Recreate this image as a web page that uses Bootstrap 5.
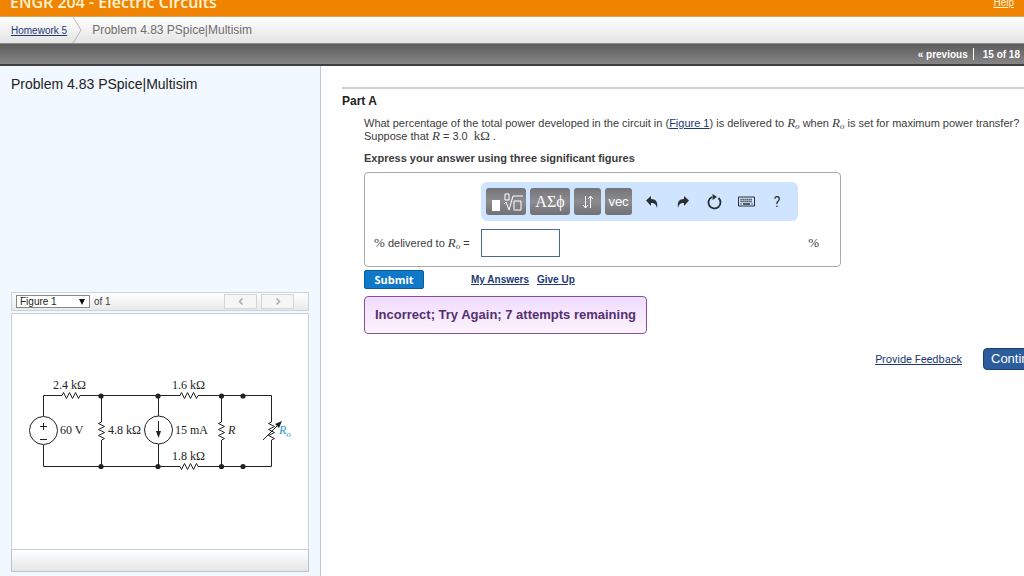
<!DOCTYPE html>
<html lang="en">
<head>
<meta charset="utf-8">
<meta name="viewport" content="width=device-width, initial-scale=1">
<title>Problem 4.83 PSpice|Multisim</title>
<link href="https://cdn.jsdelivr.net/npm/bootstrap@5.3.0/dist/css/bootstrap.min.css" rel="stylesheet">
<style>
  body { font-family: "Liberation Sans", Arial, sans-serif; font-size: 12px; line-height: 13px; color: #3c3c3c; overflow: hidden; }
  a { color: #1d3a75; }
  .course-bar { background: #f08400; height: 17px; border-bottom: 1px solid #d9a258; padding: 0 10px 5px; overflow: hidden; }
  .course-title { font: 600 16px/18px "Open Sans", Verdana, sans-serif; color: #fff3d6; }
  .help-link { color: #fff3d6; font-size: 10px; line-height: 16px; }
  .crumbs { background: linear-gradient(#fff, #e4e4e4); height: 26px; padding-left: 11px; }
  .crumb-home { font-size: 10px; }
  .crumb-here { font-size: 12px; line-height: 14px; color: #6e6e6e; }
  .pager-bar { background: linear-gradient(#5c5c5c, #868686); height: 23px; border-top: 1px solid #8d8d8d; border-bottom: 2px solid #3e3e3e; font-size: 10px; padding-right: 4px; }
  .pager-bar a, .pager-bar span { color: #fff; }
  .pager-rule { width: 1px; height: 12px; background: #fff; margin: 0 9px 0 5px; }
  .side { flex: 0 0 321px; background: #f2f8ff; border-right: 1px solid #b9c6d4; padding: 10px 11px 4px; }
  .side h1 { font-size: 14px; line-height: 17px; color: #222; }
  .fig-bar { background: linear-gradient(#fff, #e9e9e9); border: 1px solid #c8d4de; font-size: 10px; height: 19px; padding: 0 14px 0 4px; }
  .fig-select { width: 74px; height: 13px; border: 1px solid #888; background: #fff; color: #222; font-size: 10px; line-height: 11px; padding: 0 3px; appearance: none; }
  .fig-select-wrap svg { position: absolute; right: 5px; top: 4px; pointer-events: none; }
  .fig-nav { width: 33px; height: 15px; border: 1px solid #d0d5da; border-radius: 0; background: #f6f6f6; }
  .fig-body { background: #fff; border: 1px solid #c4d0da; height: 237px; margin-top: 2px; }
  .fig-foot { background: linear-gradient(#fff, #e6e6e6); border: 1px solid #b8c5ce; border-top: 0; height: 22px; }
  .circuit-label { font: 12px "Liberation Serif", "Times New Roman", serif; fill: #222; }
  .task { min-width: 0; padding: 21px 0 0 21px; overflow: hidden; }
  .part { border-top: 2px solid #cfcfcf; padding-top: 5px; }
  .part h2 { font-size: 12px; line-height: 14px; font-weight: 700; color: #222; }
  .part-content { padding-left: 22px; }
  .question { font-size: 11px; line-height: 13px; margin: 9px 0; }
  .hint { font-size: 11px; line-height: 13px; font-weight: 700; margin-bottom: 7px; }
  .mathvar { font-family: "Liberation Serif", "Times New Roman", serif; font-size: 13px; line-height: 10px; }
  .mathvar sub { font-size: 9px; bottom: -2px; }
  .answer-box { width: 477px; max-width: 100%; height: 95px; border: 1px solid #aaa; border-radius: 4px; padding: 9px 9px; }
  .mathbar { background: #cfe5ff; border-radius: 6px; width: 317px; height: 39px; padding: 0 5px; margin-left: 107px; }
  .tool-btn { height: 27px; border: 0; border-radius: 3px; background: linear-gradient(#74747a, #8c8c8f 50%, #707075); color: #fff; line-height: 20px; padding: 0; }
  .tool-sq { width: 27px; font-size: 13px; }
  .tool-wide { width: 40px; font: 16px/20px "Liberation Serif", serif; }
  .tool-icon { width: 16px; height: 18px; border: 0; background: none; color: #2b2f33; padding: 0; }
  .tool-help { font: 14px/18px Roboto, sans-serif; }
  .answer-label { width: 107px; font-size: 11px; }
  .answer-input { width: 79px; height: 28px; border: 1px solid #4a6a8e; border-radius: 0; background: #fff; padding: 2px 4px; font-size: 14px; }
  .submit-row { margin-top: 3px; }
  .submit-btn { width: 60px; height: 19px; background: #0f78c8; border: 1px solid #0b5c9c; border-radius: 2px; color: #fff; font: 700 11px/15px "Open Sans", sans-serif; padding: 0; }
  .answer-links { font-size: 10px; font-weight: 700; margin-left: 47px; gap: 8px; }
  .verdict { background: linear-gradient(#f0dcff, #fdf3fc); border: 1px solid #8a4f98; border-radius: 4px; color: #55306f; font-size: 13px; line-height: 16px; font-weight: 700; padding: 10px; margin-top: 7px; width: 283px; white-space: nowrap; }
  .feedback { font-size: 11px; gap: 21px; margin-right: -21px; margin-top: 14px; }
  .feedback a { font-family: Roboto, sans-serif; }
  .continue-btn { width: 62px; height: 22px; background: #2d5c9c; border: 1px solid #1d3f6e; border-radius: 4px; color: #fff; font-size: 13px; line-height: 18px; padding: 0 7px; text-align: left; }
</style>
</head>
<body class="d-flex flex-column vh-100">
<header>
  <div class="course-bar d-flex justify-content-between align-items-end">
    <span class="course-title">ENGR 204 - Electric Circuits</span>
    <a class="help-link" href="#">Help</a>
  </div>
  <nav class="crumbs d-flex align-items-center" aria-label="Breadcrumb">
    <a class="crumb-home" href="#">Homework 5</a>
    <svg class="ms-1 me-2" width="13" height="26" aria-hidden="true"><path d="M2 0 10 13 2 26" fill="none" stroke="#b8b8b8"/></svg>
    <span class="crumb-here">Problem 4.83 PSpice|Multisim</span>
  </nav>
  <div class="pager-bar d-flex justify-content-end align-items-center fw-bold">
    <a class="text-decoration-none" href="#">« previous</a>
    <span class="pager-rule"></span>
    <span>15 of 18</span>
  </div>
</header>
<div class="d-flex flex-grow-1">
  <aside class="side d-flex flex-column">
    <h1 class="m-0">Problem 4.83 PSpice|Multisim</h1>
    <section class="mt-auto" aria-label="Figure">
      <div class="fig-bar d-flex align-items-center">
        <div class="fig-select-wrap position-relative d-flex me-1">
          <select class="fig-select" id="figure-pick" aria-label="Figure"><option>Figure 1</option></select>
          <svg width="6" height="6" aria-hidden="true"><path d="M0 0H6L3 6Z" fill="#111"/></svg>
        </div>
        <label for="figure-pick">of 1</label>
        <button class="fig-nav btn p-0 ms-auto me-1 d-flex align-items-center justify-content-center" type="button" aria-label="Previous figure"><svg width="6" height="7"><path d="M4.500 .5 1.500 3.500 4.500 6.500" fill="none" stroke="#aaa" stroke-width="1.500"/></svg></button>
        <button class="fig-nav btn p-0 d-flex align-items-center justify-content-center" type="button" aria-label="Next figure"><svg width="6" height="7"><path d="M1.500 .5 4.500 3.500 1.500 6.500" fill="none" stroke="#aaa" stroke-width="1.500"/></svg></button>
      </div>
      <div class="fig-body">
        <svg class="d-block w-100 h-100" viewBox="12 314 296 235" role="img" aria-label="Circuit diagram">
          <g fill="none" stroke="#222" stroke-width="1">
            <path d="M43.500 416V395.500H62l1.500-3 3 6 3-6 3 6 3-6 3 6 1.500-3H180l1.500-3 3 6 3-6 3 6 3-6 3 6 1.500-3H271.500V422l-3 1.500 6 3-6 3 6 3-6 3 6 3-3 1.500V466.500H198l-1.500-3-3 6-3-6-3 6-3-6-3 6-1.500-3H43.500V445"/>
            <path d="M101.500 395.500V422l-3 1.500 6 3-6 3 6 3-6 3 6 3-3 1.500V466.500M158.500 395.500V416M158.500 444V466.500M221.500 395.500V422l-3 1.500 6 3-6 3 6 3-6 3 6 3-3 1.500V466.500"/>
            <circle cx="43.500" cy="430.500" r="14"/><circle cx="158.500" cy="430" r="14"/>
            <path d="M40 426.500h7M43.500 423v7M40 439.500h7M158.500 421v12M263 440l14-14"/>
          </g>
          <g fill="#222">
            <circle cx="101" cy="396" r="2.600"/><circle cx="158" cy="396" r="2.600"/><circle cx="221.500" cy="396" r="2.600"/><circle cx="243" cy="396" r="2.600"/>
            <circle cx="101" cy="466.500" r="2.600"/><circle cx="158" cy="466.500" r="2.600"/><circle cx="221.500" cy="466.500" r="2.600"/><circle cx="243" cy="466.500" r="2.600"/>
            <path d="M156 431h5l-2.500 7ZM282 421l-3 7-4-4Z"/>
          </g>
          <g class="circuit-label">
            <text x="53" y="389">2.4 kΩ</text><text x="172" y="389">1.6 kΩ</text>
            <text x="60" y="434">60 V</text><text x="108" y="434">4.8 kΩ</text>
            <text x="175" y="434">15 mA</text><text x="228" y="434" font-style="italic">R</text>
            <text x="172" y="460">1.8 kΩ</text>
            <text x="279" y="434" font-style="italic" style="fill:#2298c4">R<tspan dy="3" font-size="9">o</tspan></text>
          </g>
        </svg>
      </div>
      <div class="fig-foot"></div>
    </section>
  </aside>
  <main class="task flex-grow-1">
    <section class="part">
      <h2 class="m-0">Part A</h2>
      <div class="part-content">
        <p class="question">What percentage of the total power developed in the circuit in (<a href="#">Figure 1</a>) is delivered to <i class="mathvar">R<sub>o</sub></i> when <i class="mathvar">R<sub>o</sub></i> is set for maximum power transfer?<br>
        Suppose that <i class="mathvar">R</i> = 3.0&nbsp; <span class="mathvar">kΩ</span> .</p>
        <p class="hint">Express your answer using three significant figures</p>
        <div class="answer-box">
          <div class="mathbar d-flex align-items-center">
            <button class="tool-btn tool-wide me-1" type="button" aria-label="Templates">
              <svg class="d-block mx-auto" width="36" height="24"><path d="M4 10h8v11H4Z" fill="#fff"/><path d="M17 4h4v6h-4ZM16 14l2-2 3 8 4-14h10M26 11h7v9h-7Z" fill="none" stroke="#fff"/></svg>
            </button>
            <button class="tool-btn tool-wide me-1" type="button">ΑΣϕ</button>
            <button class="tool-btn tool-sq me-1" type="button" aria-label="Arrows"><svg class="d-block mx-auto" width="12" height="16"><path d="M3.500 2v12M1 11l2.500 3L6 11M8.500 14V2M6 5l2.500-3L11 5" fill="none" stroke="#fff"/></svg></button>
            <button class="tool-btn tool-sq" type="button">vec</button>
            <div class="d-flex flex-grow-1 justify-content-between ps-2 ms-1 pe-1 me-1">
              <button class="tool-icon" type="button" aria-label="Undo"><svg width="14" height="14" viewBox="0 0 14 14"><path d="M1 5.500 6 1v3c5 0 7 3 6 9-1-4-2.500-5-6-5v3Z" fill="currentColor"/></svg></button>
              <button class="tool-icon" type="button" aria-label="Redo"><svg width="14" height="14" viewBox="0 0 14 14"><path d="M13 5.500 8 1v3C3 4 1 7 2 13c1-4 2.500-5 6-5v3Z" fill="currentColor"/></svg></button>
              <button class="tool-icon" type="button" aria-label="Reset"><svg width="15" height="16" viewBox="0 0 15 16"><path d="M11.500 4A6 6 0 1 1 5 3" fill="none" stroke="currentColor" stroke-width="1.800"/><path d="M5.500 0 10 3 5.500 6Z" fill="currentColor"/></svg></button>
              <button class="tool-icon" type="button" aria-label="Keyboard"><svg width="17" height="11" viewBox="0 0 17 11"><path d="M.5 1h16v9H.5Z" fill="none" stroke="currentColor"/><path d="M2.500 3.500h12M2.500 5.500h12" stroke="currentColor" stroke-width="1.300" stroke-dasharray="1.200 .8"/><path d="M2.500 8h1M5 8h7M13.500 8h1" stroke="currentColor" stroke-width="1.300"/></svg></button>
              <button class="tool-icon tool-help" type="button" aria-label="Help">?</button>
            </div>
          </div>
          <div class="d-flex align-items-center mt-2">
            <label class="answer-label" for="answer"><span class="mathvar">%</span> delivered to <i class="mathvar">R<sub>o</sub></i> =</label>
            <input class="answer-input" id="answer" type="text">
            <span class="mathvar ms-auto me-2 pe-1">%</span>
          </div>
        </div>
        <div class="submit-row d-flex align-items-center">
          <button class="submit-btn" type="button">Submit</button>
          <div class="answer-links d-flex"><a href="#">My Answers</a><a href="#">Give Up</a></div>
        </div>
        <div class="verdict">Incorrect; Try Again; 7 attempts remaining</div>
      </div>
    </section>
    <div class="feedback d-flex justify-content-end align-items-center">
      <a href="#">Provide Feedback</a>
      <button class="continue-btn" type="button">Continue</button>
    </div>
  </main>
</div>
<script src="https://cdn.jsdelivr.net/npm/bootstrap@5.3.0/dist/js/bootstrap.bundle.min.js"></script>
</body>
</html>
